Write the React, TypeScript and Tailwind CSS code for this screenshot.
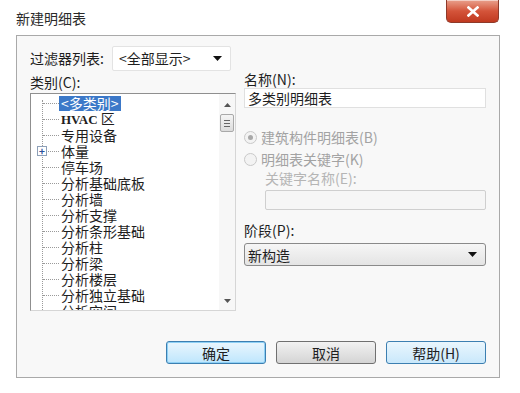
import React from "react";

const font = { fontFamily: '"Noto Sans CJK SC", "Noto Sans", sans-serif' };

const items = [
  "HVAC 区",
  "专用设备",
  "体量",
  "停车场",
  "分析基础底板",
  "分析墙",
  "分析支撑",
  "分析条形基础",
  "分析柱",
  "分析梁",
  "分析楼层",
  "分析独立基础",
  "分析空间",
];

function TriDown({ className = "" }: { className?: string }) {
  return (
    <svg width="9" height="5" viewBox="0 0 9 5" className={className}>
      <path d="M0 0 L9 0 L4.5 5 Z" fill="#111" />
    </svg>
  );
}

function Radio({ checked }: { checked?: boolean }) {
  return (
    <span className="relative inline-flex w-[13px] h-[13px] rounded-full border border-[#c9c9c9] bg-[#f3f3f3] items-center justify-center">
      {checked && <span className="w-[5px] h-[5px] rounded-full bg-[#a8a8a8]" />}
    </span>
  );
}

export default function App() {
  return (
    <div className="w-[520px] h-[393px] bg-white relative overflow-hidden text-[#1e1e1e]" style={font}>
      <div className="flex items-start h-[35px]">
        <div className="ml-[16px] mt-[8px] text-[14px] leading-[20px] text-[#2a2a2a]">新建明细表</div>
        <div className="ml-auto mr-[21px] w-[53px] h-[23px] rounded-b-[5px] border border-t-0 border-[#8e3a2a] bg-gradient-to-b from-[#e8a08c] via-[#d4543a] to-[#c0391f] flex items-center justify-center shadow-[inset_0_1px_0_rgba(255,255,255,0.5)]">
          <svg width="12" height="11" viewBox="0 0 12 11">
            <path d="M1.5 1.5 L10.5 9.5 M10.5 1.5 L1.5 9.5" stroke="#fff" strokeWidth="2.6" strokeLinecap="square" />
          </svg>
        </div>
      </div>
      <div className="ml-[16px] w-[484px] h-[343px] border border-[#a9a9a9] bg-[#f8f8f8] px-[13px] pt-[9px] flex flex-col">
        <div className="flex items-center h-[26px]">
          <span className="text-[14px] leading-[18px] w-[82px]">过滤器列表:</span>
          <div className="w-[119px] h-[25px] bg-white border border-[#e3e3e3] rounded-[2px] flex items-center pl-[6px] pr-[8px]">
            <span className="text-[14px] leading-[18px]">&lt;全部显示&gt;</span>
            <TriDown className="ml-auto" />
          </div>
        </div>
        <div className="flex mt-[1px]">
          <div className="w-[207px] flex flex-col">
            <div className="text-[14px] h-[21px] leading-[20px]">类别(C):</div>
            <div className="relative h-[218px] bg-white border border-[#8f8f8f] border-r-[#d6d6d6] border-b-[#d6d6d6] overflow-hidden flex">
              <div className="relative flex-1 overflow-hidden pt-[1px]">
                <div className="absolute left-[11px] top-[6px] bottom-0 border-l border-dotted border-[#9a9a9a]" />
                <div className="flex items-center h-[16px]">
                  <span className="w-[16px] ml-[12px] border-t border-dotted border-[#9a9a9a]" />
                  <span className="px-[2px] bg-[#3b78c8] text-white text-[14px] leading-[15px]">&lt;多类别&gt;</span>
                </div>
                {items.map((t, i) => (
                  <div key={t} className="relative flex items-center h-[16px]">
                    {t === "体量" && (
                      <span className="absolute left-[6px] top-[3px] w-[10px] h-[10px] border border-[#8ea0b8] bg-white flex items-center justify-center text-[#2b4f9a] text-[10px] leading-[8px] font-bold">+</span>
                    )}
                    <span className="w-[16px] ml-[12px] border-t border-dotted border-[#9a9a9a]" />
                    {i === 0 ? (
                      <span className="ml-[2px] text-[13px] leading-[16px] font-bold" style={{ fontFamily: '"Liberation Serif", serif' }}>
                        HVAC <span style={font} className="font-normal text-[14px]">区</span>
                      </span>
                    ) : (
                      <span className="ml-[2px] text-[14px] leading-[16px]">{t}</span>
                    )}
                  </div>
                ))}
              </div>
              <div className="w-[16px] bg-[#f7f7f7] flex flex-col items-center">
                <svg width="7" height="4" viewBox="0 0 7 4" className="mt-[9px]">
                  <path d="M0 4 L7 4 L3.5 0 Z" fill="#555" />
                </svg>
                <div className="mt-[7px] w-[14px] h-[18px] border border-[#a9a9a9] rounded-[2px] bg-gradient-to-b from-[#f5f5f5] to-[#dcdcdc] flex flex-col items-center justify-center gap-[2px]">
                  <span className="w-[6px] h-px bg-[#666]" />
                  <span className="w-[6px] h-px bg-[#666]" />
                  <span className="w-[6px] h-px bg-[#666]" />
                </div>
                <svg width="7" height="4" viewBox="0 0 7 4" className="mt-auto mb-[7px]">
                  <path d="M0 0 L7 0 L3.5 4 Z" fill="#555" />
                </svg>
              </div>
            </div>
          </div>
          <div className="ml-[8px] w-[243px] flex flex-col">
            <div className="text-[14px] h-[18px] leading-[18px] -mt-[2px]">名称(N):</div>
            <div className="h-[20px] bg-white border border-[#e0e0e0] flex items-center pl-[3px] text-[14px] leading-[18px]">多类别明细表</div>
            <div className="mt-[19px] flex items-center gap-[4px] text-[14px] leading-[18px] text-[#a3a3a3] h-[20px]">
              <Radio checked />
              <span>建筑构件明细表(B)</span>
            </div>
            <div className="mt-[2px] flex items-center gap-[4px] text-[14px] leading-[18px] text-[#a3a3a3] h-[20px]">
              <Radio />
              <span>明细表关键字(K)</span>
            </div>
            <div className="ml-[21px] text-[14px] text-[#b5b5b5] h-[18px] leading-[18px]">关键字名称(E):</div>
            <div className="ml-[21px] mt-[3px] h-[20px] bg-[#f6f6f6] border border-[#cfcfcf] rounded-[2px]" />
            <div className="mt-[10px] text-[14px] h-[20px] leading-[20px]">阶段(P):</div>
            <div className="mt-[3px] h-[23px] rounded-[3px] border border-[#8a8a8a] bg-gradient-to-b from-[#f6f6f6] to-[#e4e4e4] flex items-center pl-[3px] pr-[8px]">
              <span className="text-[14px] leading-[18px]">新构造</span>
              <TriDown className="ml-auto" />
            </div>
          </div>
        </div>
        <div className="mt-[30px] flex justify-end gap-[10px]">
          <button className="w-[100px] h-[23px] rounded-[3px] border border-[#3c7fb1] bg-gradient-to-b from-[#eaf6fd] to-[#bee6fd] text-[14px] leading-[18px] shadow-[inset_0_0_0_1px_#8ed0f5] flex items-center justify-center">
            确定
          </button>
          <button className="w-[100px] h-[23px] rounded-[3px] border border-[#707070] bg-gradient-to-b from-[#f2f2f2] to-[#d4d4d4] text-[14px] leading-[18px] flex items-center justify-center">
            取消
          </button>
          <button className="w-[100px] h-[23px] rounded-[3px] border border-[#3c7fb1] bg-gradient-to-b from-[#eaf6fd] to-[#c9e8fb] text-[14px] leading-[18px] flex items-center justify-center">
            帮助(H)
          </button>
        </div>
      </div>
    </div>
  );
}
